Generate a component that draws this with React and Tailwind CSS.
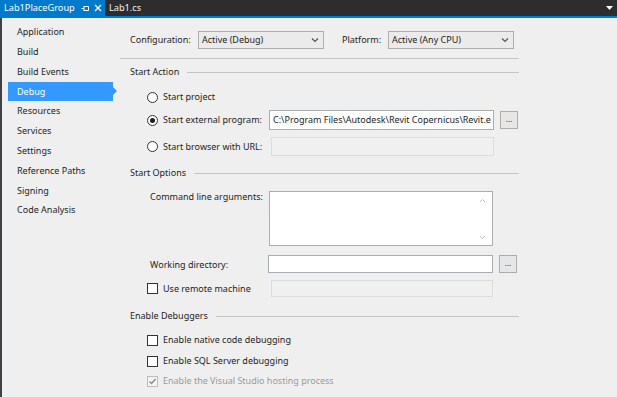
import React from "react";

const font = { fontFamily: '"Noto Sans", "Open Sans", sans-serif' };

function Radio({ checked }) {
  return (
    <span className="w-[11px] h-[11px] rounded-full border border-[#333333] bg-white flex items-center justify-center shrink-0">
      {checked && <span className="w-[5px] h-[5px] rounded-full bg-[#1e1e1e]" />}
    </span>
  );
}

function Check({ checked, disabled }) {
  return (
    <span
      className={
        "w-[11px] h-[11px] border flex items-center justify-center shrink-0 " +
        (disabled ? "border-[#bcbcbc] bg-[#f4f4f4]" : "border-[#333333] bg-white")
      }
    >
      {checked && (
        <svg width="9" height="9" viewBox="0 0 9 9">
          <path d="M1.5 4.5 L3.5 6.5 L7.5 2" fill="none" stroke="#8a8a8a" strokeWidth="1.4" />
        </svg>
      )}
    </span>
  );
}

function Heading({ label, className }) {
  return (
    <div className={"flex items-center h-[14px] pl-[10px] " + className}>
      <span className="text-[#1e1e1e] whitespace-nowrap">{label}</span>
      <span className="flex-1 h-px bg-[#c4c4c4] ml-[8px]" />
    </div>
  );
}

function Dots() {
  return (
    <span className="w-[18px] h-[18px] border border-[#adadad] bg-[#e6e6e6] flex items-center justify-center text-[8px] text-[#333] leading-none ml-[6px] pb-[2px] shrink-0">
      ...
    </span>
  );
}

function Select({ value, w }) {
  return (
    <div className={"h-[18px] border border-[#acacac] bg-[#ebebeb] flex items-center pl-[3px] pr-[4px] " + w}>
      <span className="flex-1 text-[#1e1e1e]">{value}</span>
      <svg width="8" height="6" viewBox="0 0 8 6">
        <path d="M1 1.5 L4 4.5 L7 1.5" fill="none" stroke="#555" strokeWidth="1.2" />
      </svg>
    </div>
  );
}

const sideItems = [
  "Application",
  "Build",
  "Build Events",
  "Debug",
  "Resources",
  "Services",
  "Settings",
  "Reference Paths",
  "Signing",
  "Code Analysis",
];

export default function App() {
  return (
    <div className="w-[617px] h-[397px] bg-[#efefef] overflow-hidden text-[9px] text-[#1e1e1e] flex flex-col" style={font}>
      {/* tab bar */}
      <div className="h-[16px] bg-[#2d2d30] flex items-stretch shrink-0">
        <div className="w-[105px] shrink-0 bg-[#007acc] flex items-center pl-[4px] text-white text-[9.2px] whitespace-nowrap">
          <span>Lab1PlaceGroup</span>
          <svg className="ml-[6px] shrink-0" width="9" height="7" viewBox="0 0 9 7">
            <path d="M0.5 3.5 H3 M3 1 V6 M3 1.5 H7.5 V5.5 H3" fill="none" stroke="#ffffff" strokeWidth="1" />
          </svg>
          <svg className="ml-[4px] shrink-0" width="8" height="8" viewBox="0 0 8 8">
            <path d="M1 1 L7 7 M7 1 L1 7" stroke="#ffffff" strokeWidth="1.3" />
          </svg>
        </div>
        <div className="flex items-center pl-[4px] text-[#f1f1f1] text-[9.2px] flex-1">Lab1.cs</div>
        <div className="flex items-center pr-[4px]">
          <svg width="7" height="4" viewBox="0 0 7 4">
            <path d="M0 0 H7 L3.5 4 Z" fill="#ffffff" />
          </svg>
        </div>
      </div>
      <div className="h-[2px] bg-[#007acc] shrink-0" />

      <div className="flex flex-1">
        {/* left dark edge */}
        <div className="w-[2px] bg-[#3f3f46]" />
        {/* sidebar */}
        <div className="w-[118px] pt-[4px] flex flex-col">
          {sideItems.map((it) =>
            it === "Debug" ? (
              <div key={it} className="h-[19.8px] flex items-center">
                <div className="relative ml-[6px] w-[105px] h-[19px] bg-[#3399ff] text-white flex items-center pl-[9px]">
                  {it}
                  <span className="absolute right-[-4px] top-[5px] w-0 h-0 border-t-[4.5px] border-b-[4.5px] border-l-[4px] border-t-transparent border-b-transparent border-l-[#3399ff]" />
                </div>
              </div>
            ) : (
              <div key={it} className="h-[19.8px] flex items-center pl-[15px]">
                {it}
              </div>
            )
          )}
        </div>

        {/* main */}
        <div className="w-[399px] flex flex-col">
          <div className="mt-[13px] flex items-center pl-[10px] h-[18px]">
            <span className="w-[68px]">Configuration:</span>
            <Select value="Active (Debug)" w="w-[126px]" />
            <span className="ml-[18px] w-[46px]">Platform:</span>
            <Select value="Active (Any CPU)" w="w-[126px]" />
          </div>
          <div className="mt-[9px] h-px bg-[#c4c4c4]" />

          <Heading label="Start Action" className="mt-[6px]" />

          <div className="mt-[8px] h-[20px] flex items-center pl-[27px]">
            <Radio />
            <span className="ml-[5px]">Start project</span>
          </div>
          <div className="mt-[3px] h-[20px] flex items-center pl-[27px]">
            <Radio checked />
            <span className="ml-[5px] w-[106px] whitespace-nowrap">Start external program:</span>
            <div className="w-[225px] h-[20px] border border-[#abadb3] bg-white pl-[3px] overflow-hidden whitespace-nowrap leading-[18px]">
              C:\Program Files\Autodesk\Revit Copernicus\Revit.e
            </div>
            <Dots />
          </div>
          <div className="mt-[7px] h-[19px] flex items-center pl-[27px]">
            <Radio />
            <span className="ml-[5px] w-[108px] whitespace-nowrap">Start browser with URL:</span>
            <div className="w-[223px] h-[19px] border border-[#dcdcdc] bg-[#f0f0f0]" />
          </div>

          <Heading label="Start Options" className="mt-[10px]" />

          <div className="mt-[11px] flex pl-[30px]">
            <span className="w-[119px] -mt-[1px] whitespace-nowrap">Command line arguments:</span>
            <div className="relative w-[224px] h-[55px] border border-[#abadb3] bg-white">
              <svg className="absolute right-[6px] top-[6px]" width="7" height="5" viewBox="0 0 7 5">
                <path d="M1 4 L3.5 1.5 L6 4" fill="none" stroke="#c2c2c2" strokeWidth="1" />
              </svg>
              <svg className="absolute right-[6px] bottom-[5px]" width="7" height="5" viewBox="0 0 7 5">
                <path d="M1 1 L3.5 3.5 L6 1" fill="none" stroke="#c2c2c2" strokeWidth="1" />
              </svg>
            </div>
          </div>

          <div className="mt-[9px] h-[18px] flex items-center pl-[30px]">
            <span className="w-[118px] pt-[1px]">Working directory:</span>
            <div className="w-[225px] h-[18px] border border-[#abadb3] bg-white" />
            <Dots />
          </div>

          <div className="mt-[7px] h-[17px] flex items-center pl-[27px]">
            <Check />
            <span className="ml-[5px] w-[108px] whitespace-nowrap">Use remote machine</span>
            <div className="w-[222px] h-[17px] border border-[#dcdcdc] bg-[#f0f0f0]" />
          </div>

          <Heading label="Enable Debuggers" className="mt-[12px]" />

          <div className="mt-[9px] h-[16px] flex items-center pl-[27px]">
            <Check />
            <span className="ml-[5px]">Enable native code debugging</span>
          </div>
          <div className="mt-[5px] h-[16px] flex items-center pl-[27px]">
            <Check />
            <span className="ml-[5px]">Enable SQL Server debugging</span>
          </div>
          <div className="mt-[4px] h-[16px] flex items-center pl-[27px]">
            <Check checked disabled />
            <span className="ml-[5px] text-[#9a9a9a]">Enable the Visual Studio hosting process</span>
          </div>
        </div>
        <div className="flex-1" />
      </div>
    </div>
  );
}
